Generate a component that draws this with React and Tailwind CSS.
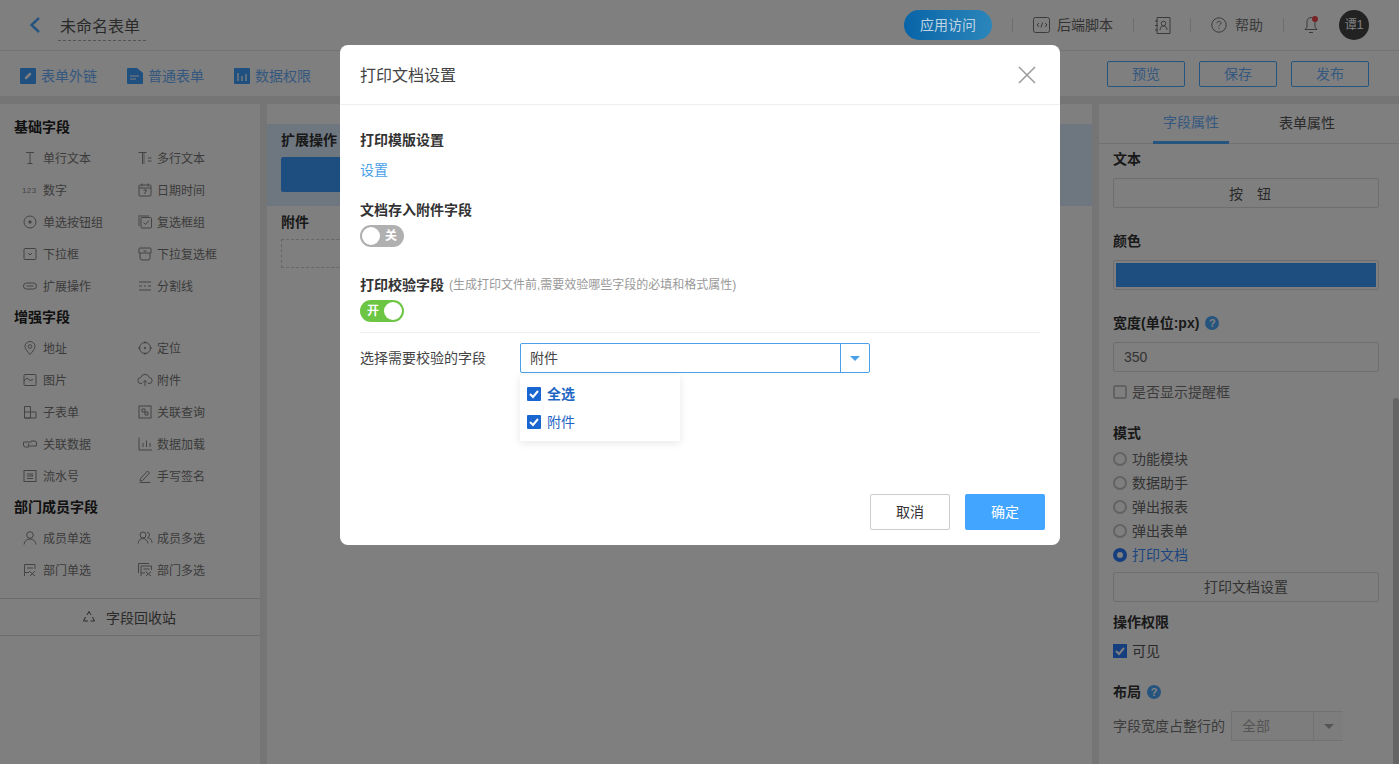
import React from 'react';

const Ico = ({ className = 'w-4 h-4', children, vb = '0 0 16 16' }) => (
    <svg viewBox={vb} className={className} fill="none" stroke="currentColor" strokeWidth="1">{children}</svg>
);

const icons = {
    text: <><path d="M4 2.500h8M8 2.500v10.500M5.500 13.500h5" /></>,
    multi: <><path d="M1.500 2.500h8M5.500 2.500v11.500M11 8h3.500M11 11h3.500" /><path d="M7 3v11" strokeWidth="1.500" opacity=".5" /></>,
    num: <text x="0" y="10.500" fontSize="8" letterSpacing=".4" fill="currentColor" stroke="none" fontFamily="Liberation Sans">123</text>,
    date: <><rect x="2" y="3" width="12" height="11" rx="1" /><path d="M2 6h12M5 1.500v3M11 1.500v3M6.500 8h3l-2 4" /></>,
    radio: <><circle cx="8" cy="8" r="6" /><circle cx="8" cy="8" r="1.200" fill="currentColor" /></>,
    check: <><rect x="4" y="3.500" width="10.500" height="10.500" rx="1" /><path d="M2 12V2h10" strokeWidth="1.800" opacity=".5" /><path d="M6.500 8.500l2 2 3.500-4" /></>,
    select: <><rect x="2" y="2.500" width="12" height="11" rx="1" /><path d="M6 7l2 2 2-2" /></>,
    multisel: <><path d="M3 2h10a1 1 0 0 1 1 1v4H2V3a1 1 0 0 1 1-1zM3 7v5a2 2 0 0 0 2 2h6a2 2 0 0 0 2-2V7" /><path d="M6.500 4.500l1.500 1 1.500-1" /></>,
    pill: <><rect x="1.500" y="5" width="13" height="6" rx="3" /><path d="M4.500 8h7" /></>,
    divider: <><path d="M2 4h12M2 12h12M2 8h3M7 8h2M11 8h3" /></>,
    pin: <><path d="M8 14.500c-3-3.500-5-5.500-5-8a5 5 0 0 1 10 0c0 2.500-2 4.500-5 8z" /><circle cx="8" cy="6.500" r="1.800" /></>,
    locate: <><circle cx="8" cy="8" r="5.500" /><path d="M8 1v2.500M8 12.500V15M1 8h2.500M12.500 8H15" /><circle cx="8" cy="8" r=".8" fill="currentColor" /></>,
    image: <><rect x="2" y="2.500" width="12" height="11" rx="1" /><path d="M2 9l3-3 3 2.500 3-1" /></>,
    cloud: <><path d="M5 11.500H4a3 3 0 0 1-.3-6 4.500 4.500 0 0 1 8.600 0 3 3 0 0 1-.3 6h-1" /><path d="M8 14V8.500M6 10.500l2-2 2 2" /></>,
    sub: <><path d="M2.500 14V2.500h6V14zM8.500 8H14v6H2.500M2.500 8h6" /></>,
    lookup: <><rect x="2" y="2" width="12" height="12" /><path d="M5 5h3v3H5zM8 8h3v3H8z" /></>,
    linkdata: <><path d="M7 11H3.500a2 2 0 0 1-2-2V6h8M9 5h3.500a2 2 0 0 1 2 2v3h-8V7.500" /></>,
    chart: <><path d="M2 1.500V14h13M6 7v4M9.500 4.500V11M13 7v4" /></>,
    serial: <><rect x="2" y="2.500" width="12" height="11" /><path d="M5 6h6M5 8h6l-1.500-1M5 10.500h6" /></>,
    pen: <><path d="M3.500 10.500l7-7.500 2 2-7 7.500-2.500.5zM2.500 14.500h11" /></>,
    user: <><circle cx="8" cy="5" r="3.300" /><path d="M2 14.500c.3-3.500 3-5.500 6-5.500s5.700 2 6 5.500" /></>,
    users: <><circle cx="6" cy="5" r="3" /><path d="M1 13.500c.3-3 2.500-5 5-5s4.700 2 5 5M10 2a3 3 0 0 1 .5 5.800 5 5 0 0 1 4.500 5" /></>,
    dept: <><path d="M2.500 14V2.500H13V7M2.500 10.500H7M5 6h6M7 9l6 5M13 9l-5 5" /></>,
    depts: <><path d="M1.500 11V1.500H12M4 14V4h10.500v4M4 11h4M6.500 7h6M8.500 9.500l5.500 4.500M14 9.500L9 14" /></>,
};

const Field = ({ icon, label, second }) => (
    <div className={`flex items-center h-8 ${second ? 'pl-[137px]' : 'pl-[22px]'}`}>
        <span className="w-[16px] h-[16px] text-[#888] flex-none">
            <Ico className="w-[16px] h-[16px]">{icons[icon]}</Ico>
        </span>
        <span className={`pt-[2px] text-[12px] text-[#777] ${second ? 'ml-[4px]' : 'ml-[5px]'}`}>{label}</span>
    </div>
);

const FieldRow = ({ a, b }) => (
    <div className="grid grid-cols-[114px_1fr] h-8">
        <Field icon={a[0]} label={a[1]} />
        <div className="-ml-[114px]"><Field icon={b[0]} label={b[1]} second /></div>
    </div>
);

const GroupTitle = ({ children }) => (
    <div className="h-[30px] flex items-center pl-[14px] text-[14px] font-bold text-[#222]">{children}</div>
);

const Sidebar = () => (
    <aside className="w-[260px] bg-white pt-[8px] flex-none">
        <GroupTitle>基础字段</GroupTitle>
        <FieldRow a={['text', '单行文本']} b={['multi', '多行文本']} />
        <FieldRow a={['num', '数字']} b={['date', '日期时间']} />
        <FieldRow a={['radio', '单选按钮组']} b={['check', '复选框组']} />
        <FieldRow a={['select', '下拉框']} b={['multisel', '下拉复选框']} />
        <FieldRow a={['pill', '扩展操作']} b={['divider', '分割线']} />
        <GroupTitle>增强字段</GroupTitle>
        <FieldRow a={['pin', '地址']} b={['locate', '定位']} />
        <FieldRow a={['image', '图片']} b={['cloud', '附件']} />
        <FieldRow a={['sub', '子表单']} b={['lookup', '关联查询']} />
        <FieldRow a={['linkdata', '关联数据']} b={['chart', '数据加载']} />
        <FieldRow a={['serial', '流水号']} b={['pen', '手写签名']} />
        <GroupTitle>部门成员字段</GroupTitle>
        <FieldRow a={['user', '成员单选']} b={['users', '成员多选']} />
        <FieldRow a={['dept', '部门单选']} b={['depts', '部门多选']} />
        <div className="mt-[12px] h-[38px] border-y border-[#d8d8d8] flex items-center justify-center text-[14px] text-[#555]">
            <Ico className="w-[16px] h-[16px] mr-[9px] -ml-[3px]">
                <path d="M6 6l2-3.500L10 6M11.500 8l2 4h-4M7 12H2.500l2-4" />
            </Ico>
            <span className="pt-[2px]">字段回收站</span>
        </div>
    </aside>
);

const Label = ({ className = '', children }) => (
    <div className={`h-[30px] flex items-center text-[14px] font-bold text-[#333] ${className}`}>{children}</div>
);

const Help = () => (
    <span className="ml-[6px] w-[14px] h-[14px] rounded-full bg-[#4aa8ff] text-white text-[11px] font-bold flex items-center justify-center">?</span>
);

const Radio = ({ on, children }) => (
    <div className={`h-6 flex items-center text-[14px] ${on ? 'text-[#3a8cff]' : 'text-[#666]'}`}>
        {on
            ? <span className="w-[14px] h-[14px] rounded-full border-[4px] border-[#2a7cff] bg-white mr-[5px]" />
            : <span className="w-[14px] h-[14px] rounded-full border-2 border-[#c4c4c4] bg-white mr-[5px]" />}
        {children}
    </div>
);

const PropsPanel = () => (
    <aside className="relative w-[300px] ml-[7px] bg-white flex-none overflow-hidden">
        <div className="h-[40px] border-b border-[#e5e5e5] flex text-[14px]">
            <div className="ml-[54px] w-[76px] h-[40px] border-b-[3px] border-[#4aa8ff] text-[#6ab0ff] flex items-center justify-center">字段属性</div>
            <div className="ml-[50px] text-[#555] flex items-center">表单属性</div>
        </div>
        <div className="pl-[14px] pr-[20px]">
            <Label>文本</Label>
            <div className="mt-[4px] h-[30px] border border-[#ddd] rounded-[2px] pt-[2px] pl-[8px] flex items-center justify-center text-[14px] text-[#555]">
                <span className="mr-[14px]">按</span><span>钮</span>
            </div>
            <Label className="mt-[18px]">颜色</Label>
            <div className="mt-[4px] h-[30px] border border-[#ddd] rounded-[2px] p-[2px]">
                <div className="h-full bg-[#3a9cff]" />
            </div>
            <Label className="mt-[18px]">宽度(单位:px)<Help /></Label>
            <div className="mt-[4px] h-[30px] border border-[#ddd] rounded-[2px] pl-[10px] flex items-center text-[14px] text-[#666]">350</div>
            <div className="mt-[8px] h-6 flex items-center text-[14px] text-[#777]">
                <span className="w-[14px] h-[14px] border-2 border-[#c4c4c4] bg-white mr-[5px] rounded-[2px]" />
                是否显示提醒框
            </div>
            <Label className="mt-[15px] !h-[28px]">模式</Label>
            <Radio>功能模块</Radio>
            <Radio>数据助手</Radio>
            <Radio>弹出报表</Radio>
            <Radio>弹出表单</Radio>
            <Radio on>打印文档</Radio>
            <div className="mt-[5px] h-[30px] border border-[#ddd] rounded-[2px] flex items-center justify-center text-[14px] text-[#666]">打印文档设置</div>
            <Label className="mt-[5px]">操作权限</Label>
            <div className="mt-[2px] h-6 flex items-center text-[14px] text-[#555]">
                <span className="w-[14px] h-[14px] bg-[#2a7cff] mr-[5px] flex items-center justify-center">
                    <svg viewBox="0 0 14 14" className="w-[14px] h-[14px]" fill="none" stroke="white" strokeWidth="2"><path d="M3 7l3 3 5-6" /></svg>
                </span>
                可见
            </div>
            <Label className="mt-[14px]">布局<Help /></Label>
            <div className="mt-[4px] h-[30px] flex items-center text-[14px] text-[#777]">
                字段宽度占整行的
                <div className="ml-[6px] w-[112px] h-[30px] border-y border-l border-[#e5e5e5] bg-[#fafafa] flex items-center text-[#aaa]">
                    <span className="flex-1 pl-[10px]">全部</span>
                    <span className="w-[30px] h-full border-l border-[#e5e5e5] flex items-center justify-center">
                        <span className="w-0 h-0 border-x-[5px] border-x-transparent border-t-[5px] border-t-[#aaa]" />
                    </span>
                </div>
            </div>
        </div>
        <div className="absolute right-0 top-[294px] bottom-0 w-[6px] bg-[#c8c8c8] rounded-t-[3px]" />
    </aside>
);

const ToolItem = ({ className, children, icon }) => (
    <div className={`mt-[5px] flex items-center text-[14px] text-[#6ab0ff] ${className}`}>
        <svg viewBox="0 0 16 16" className="w-4 h-4 mr-[5px]">{icon}</svg>
        {children}
    </div>
);

const Divider = ({ className }) => <span className={`w-px h-[14px] bg-[#ddd] ${className}`} />;

const Topbar = () => (
    <header className="h-[51px] bg-white border-b border-[#e6e6e6] flex items-center pl-[28px] pr-[30px]">
        <svg viewBox="0 0 14 18" className="w-[14px] h-[18px] text-[#4aa8ff]" fill="none" stroke="currentColor" strokeWidth="2.400"><path d="M11 2L3.500 9l7.500 7" /></svg>
        <div className="ml-[16px] pl-[2px] w-[88px] h-[30px] mt-[2px] pt-[2px] border-b border-dashed border-[#aaa] text-[16px] text-[#555] flex items-center">未命名表单</div>
        <div className="flex-1" />
        <button className="relative z-30 w-[88px] h-[30px] rounded-full bg-gradient-to-r from-[#0764a8] to-[#2a86ba] text-[#bfd4e2] text-[14px]">应用访问</button>
        <Divider className="ml-[20px]" />
        <svg viewBox="0 0 18 16" className="ml-[20px] w-[18px] h-[16px] text-[#777]" fill="none" stroke="currentColor"><rect x=".5" y=".5" width="16" height="15" rx="2" /><path d="M6 6L4 8l2 2M12 6l2 2-2 2M9.500 5.500l-1.500 5" /></svg>
        <span className="ml-[6px] text-[14px] text-[#666]">后端脚本</span>
        <Divider className="ml-[20px]" />
        <svg viewBox="0 0 17 17" className="ml-[20px] w-[17px] h-[17px] text-[#777]" fill="none" stroke="currentColor"><path d="M3 .5h13v16H3zM1 4h3M1 8.500h3M1 13h3" /><circle cx="9.500" cy="6.500" r="2.300" /><path d="M6 13c.3-3 1.500-4 3.500-4s3.200 1 3.500 4" /></svg>
        <Divider className="ml-[19px]" />
        <svg viewBox="0 0 16 16" className="ml-[20px] w-[16px] h-[16px] text-[#777]" fill="none" stroke="currentColor"><circle cx="8" cy="8" r="7.200" /><path d="M6 6.200C6 4.900 7 4.300 8 4.300s2 .7 2 1.800c0 1.400-2 1.600-2 3.200M8 10.800v1.300" /></svg>
        <span className="ml-[8px] text-[14px] text-[#777]">帮助</span>
        <Divider className="ml-[20px]" />
        <div className="relative ml-[20px] w-[14px] h-[18px]">
            <svg viewBox="0 0 14 18" className="w-[14px] h-[18px] text-[#777]" fill="none" stroke="currentColor"><path d="M7 1.500C4.500 1.500 3 3.500 3 6v5l-2 2.500h12L11 11V6c0-2.500-1.500-4.500-4-4.500zM5 16.500h4" /></svg>
            <span className="absolute right-0 top-0 w-[6px] h-[6px] rounded-full bg-[#f04848]" />
        </div>
        <div className="ml-[21px] w-[30px] h-[30px] rounded-full bg-[#444] text-white text-[12px] flex items-center justify-center">谭1</div>
    </header>
);

const Toolbar = () => (
    <div className="h-[45px] bg-white flex items-center pl-[20px] pr-[30px]">
        <ToolItem className="w-[107px]" icon={<><rect width="16" height="16" rx="1" fill="#3fa0ff" /><path d="M6 10l4-4" stroke="white" strokeWidth="2.500" strokeLinecap="round" /></>}>表单外链</ToolItem>
        <ToolItem className="w-[107px]" icon={<><path d="M0 1a1 1 0 0 1 1-1h9l6 5v10a1 1 0 0 1-1 1H1a1 1 0 0 1-1-1z" fill="#3fa0ff" /><path d="M3 8h9M3 11h6" stroke="white" /></>}>普通表单</ToolItem>
        <ToolItem className="" icon={<><rect width="16" height="16" rx="1" fill="#3fa0ff" /><path d="M4 5v8M8 8v5M12 6v7" stroke="white" strokeWidth="1.300" /></>}>数据权限</ToolItem>
        <div className="flex-1" />
        {['预览', '保存', '发布'].map((t) => (
            <button key={t} className="ml-[14px] w-[78px] h-[26px] pt-[1px] border border-[#4aa8ff] rounded-[2px] text-[14px] text-[#6ab0ff] flex items-center justify-center">{t}</button>
        ))}
    </div>
);

const Canvas = () => (
    <main className="flex-1 ml-[7px] bg-white pt-[20px] overflow-hidden min-w-0">
        <div className="h-[82px] bg-[#dceeff] pl-[14px]">
            <div className="h-[32px] flex items-center text-[14px] font-bold text-[#333]">扩展操作</div>
            <div className="mt-[1px] w-[350px] h-[35px] bg-[#3a9cff] rounded-[2px]" />
        </div>
        <div className="pl-[14px]">
            <div className="h-[33px] flex items-center text-[14px] font-bold text-[#333]">附件</div>
            <div className="w-[350px] h-[29px] border border-dashed border-[#ccc]" />
        </div>
    </main>
);

const Check = ({ children, bold }) => (
    <div className={`h-[28px] pl-[7px] flex items-center text-[14px] text-[#1f66c4] ${bold ? 'font-bold' : ''}`}>
        <span className="w-[14px] h-[14px] bg-[#1a66d0] rounded-[1px] mr-[6px]">
            <svg viewBox="0 0 14 14" className="w-[14px] h-[14px]" fill="none" stroke="white" strokeWidth="2"><path d="M3 7l3 3 5-6" /></svg>
        </span>
        {children}
    </div>
);

const Toggle = ({ on }) => (
    <div className={`w-[44px] h-[22px] rounded-full flex items-center px-[2px] text-[12px] font-bold text-white ${on ? 'bg-[#6cc644] justify-between pl-[7px]' : 'bg-[#b0b0b0] justify-between pr-[7px]'}`}>
        {on ? <>开<span className="w-[18px] h-[18px] rounded-full bg-white" /></> : <><span className="w-[18px] h-[18px] rounded-full bg-white" />关</>}
    </div>
);

const PrintDialog = () => (
    <div className="absolute inset-0 z-20 bg-black/50 flex justify-center pl-px">
        <div className="mt-[45px] w-[720px] h-[500px] bg-white rounded-[8px] flex flex-col">
            <div className="h-[60px] flex-none border-b border-[#eeeeee] pl-[20px] pr-[24px] flex items-center justify-between">
                <span className="pt-[2px] text-[16px] text-[#444]">打印文档设置</span>
                <svg viewBox="0 0 18 18" className="w-[18px] h-[18px] text-[#999]" fill="none" stroke="currentColor" strokeWidth="1.500"><path d="M1 1l16 16M17 1L1 17" /></svg>
            </div>
            <div className="flex-1 px-[20px] pt-[20px]">
                <div className="h-[30px] flex items-center text-[14px] font-bold text-[#333]">打印模版设置</div>
                <div className="h-[30px] flex items-center text-[14px] text-[#4a9fe8]">设置</div>
                <div className="mt-[10px] h-[30px] flex items-center text-[14px] font-bold text-[#333]">文档存入附件字段</div>
                <Toggle />
                <div className="mt-[23px] h-[30px] flex items-center text-[14px] font-bold text-[#333]">
                    打印校验字段
                    <span className="ml-[5px] text-[12px] font-normal text-[#999]">(生成打印文件前,需要效验哪些字段的必填和格式属性)</span>
                </div>
                <Toggle on />
                <div className="mt-[10px] border-t border-[#eeeeee] pt-[10px] flex items-start">
                    <div className="w-[160px] h-[30px] flex items-center text-[14px] text-[#444]">选择需要校验的字段</div>
                    <div className="relative w-[350px] h-[30px] border border-[#4a9fe8] rounded-[2px] flex items-center text-[14px] text-[#444]">
                        <span className="flex-1 pl-[9px]">附件</span>
                        <span className="w-[29px] h-full border-l border-[#4a9fe8] flex items-center justify-center">
                            <span className="w-0 h-0 border-x-[5px] border-x-transparent border-t-[5px] border-t-[#4a9fe8]" />
                        </span>
                        <div className="absolute -left-px top-[31px] w-[160px] h-[66px] py-[5px] bg-white shadow-[0_2px_8px_rgba(0,0,0,0.1)]">
                            <Check bold>全选</Check>
                            <Check>附件</Check>
                        </div>
                    </div>
                </div>
            </div>
            <div className="h-[51px] flex-none flex items-start pl-[530px]">
                <button className="w-[80px] h-[36px] border border-[#ccc] rounded-[2px] text-[14px] text-[#333]">取消</button>
                <button className="ml-[15px] w-[80px] h-[36px] bg-[#42a5ff] rounded-[2px] text-[14px] text-white">确定</button>
            </div>
        </div>
    </div>
);

export default function App() {
    return (
        <div className="relative w-[1399px] h-[764px] overflow-hidden bg-[#eaeaea] font-['Liberation_Sans','Noto_Sans_CJK_SC',sans-serif]">
            <Topbar />
            <Toolbar />
            <div className="mt-[8px] h-[660px] flex">
                <Sidebar />
                <Canvas />
                <PropsPanel />
            </div>
            <PrintDialog />
        </div>
    );
}
